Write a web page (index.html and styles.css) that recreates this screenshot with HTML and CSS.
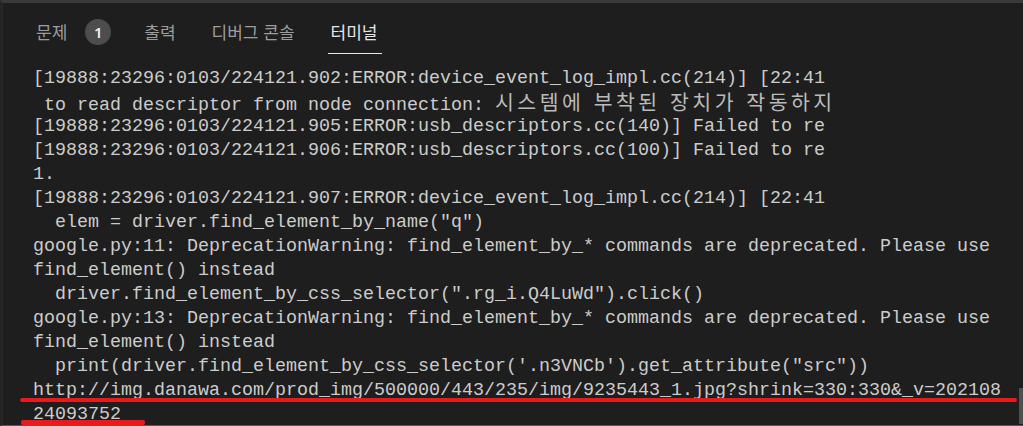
FILE: index.html
```html
<!DOCTYPE html>
<html lang="ko">
<head>
    <meta charset="UTF-8">
    <meta name="viewport" content="width=device-width, initial-scale=1.0">
    <title>Terminal Panel</title>
    <link rel="stylesheet" href="styles.css">
</head>
<body>
<div class="panel">
    <div class="tabs">
        <div class="tab tab-first">문제 <span class="badge">1</span></div>
        <div class="tab">출력</div>
        <div class="tab">디버그 콘솔</div>
        <div class="tab active">터미널</div>
    </div>
    <div class="terminal">
        <div class="line">[19888:23296:0103/224121.902:ERROR:device_event_log_impl.cc(214)] [22:41</div>
        <div class="line"> to read descriptor from node connection: <span class="ko">시스템에 부착된 장치가 작동하지</span></div>
        <div class="line">[19888:23296:0103/224121.905:ERROR:usb_descriptors.cc(140)] Failed to re</div>
        <div class="line">[19888:23296:0103/224121.906:ERROR:usb_descriptors.cc(100)] Failed to re</div>
        <div class="line">1.</div>
        <div class="line">[19888:23296:0103/224121.907:ERROR:device_event_log_impl.cc(214)] [22:41</div>
        <div class="line">  elem = driver.find_element_by_name("q")</div>
        <div class="line">google.py:11: DeprecationWarning: find_element_by_* commands are deprecated. Please use</div>
        <div class="line">find_element() instead</div>
        <div class="line">  driver.find_element_by_css_selector(".rg_i.Q4LuWd").click()</div>
        <div class="line">google.py:13: DeprecationWarning: find_element_by_* commands are deprecated. Please use</div>
        <div class="line">find_element() instead</div>
        <div class="line">  print(driver.find_element_by_css_selector('.n3VNCb').get_attribute("src"))</div>
        <div class="line marked-long">http://img.danawa.com/prod_img/500000/443/235/img/9235443_1.jpg?shrink=330:330&amp;_v=202108</div>
        <div class="line marked-short">24093752</div>
        <div class="scroll-thumb"></div>
    </div>
</div>
</body>
</html>
```

FILE: styles.css
```css
/* Dark panel like the VS Code bottom panel */
body {
    margin: 0;
    background: #1e1e1e;
    overflow: hidden;
}

.panel {
    height: 426px;
    box-sizing: border-box;
    border-top: 3px solid #3a3a3a;
    border-left: 3px solid #262626;
    border-bottom: 1px solid #5a5a5a;
    background: #1e1e1e;
    overflow: hidden;
}

/* Tab strip */
.tabs {
    height: 57px;
    display: flex;
    gap: 30px;
    padding-left: 30px;
    font-family: "Noto Sans CJK KR", "Noto Sans", sans-serif;
    font-size: 17px;
    color: #9d9d9d;
}

.tab {
    display: flex;
    align-items: center;
    height: 24px;
    padding: 16px 3px 10px;
    border-bottom: 1px solid transparent;
}

.tab-first {
    margin-right: -3px;
}

.tab.active {
    color: #e7e7e7;
    border-bottom-color: #e7e7e7;
    padding: 16px 5px 10px 3px;
}

.badge {
    display: inline-flex;
    align-items: center;
    justify-content: center;
    width: 26px;
    height: 26px;
    margin-left: 18px;
    margin-top: 2px;
    border-radius: 50%;
    background: #4d4d4d;
    color: #f0f0f0;
    font-family: "Noto Sans", sans-serif;
    font-size: 15px;
    font-weight: 600;
}

/* Terminal output */
.terminal {
    position: relative;
    padding: 7px 0 0 30px;
    font-family: "Liberation Mono", "DejaVu Sans Mono", monospace;
    font-size: 18.33px;
    line-height: 24px;
    color: #cccccc;
}

.line {
    position: relative;
    height: 24px;
    white-space: pre;
}

.ko {
    font-family: "Noto Sans CJK KR", sans-serif;
    font-size: 20.5px;
    letter-spacing: 3.5px;
    line-height: 1;
    color: #bababa;
}

/* red annotation strokes */
.marked-long::after,
.marked-short::after {
    content: "";
    position: absolute;
    height: 4px;
    border-radius: 2px;
    background: #e81a1d;
}

.marked-long::after {
    left: -13px;
    top: 19px;
    width: 997px;
}

.marked-short::after {
    left: -12px;
    top: 17px;
    width: 124px;
    height: 5px;
}

.scroll-thumb {
    position: absolute;
    right: 0;
    top: 328px;
    width: 4px;
    height: 36px;
    background: #4f4f4f;
}
```
